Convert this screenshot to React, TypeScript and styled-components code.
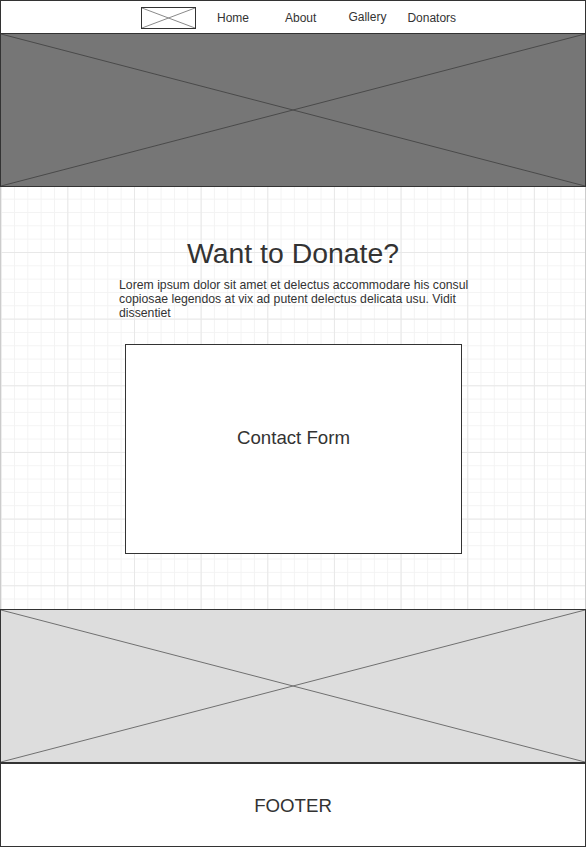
import React from "react";
import styled, { createGlobalStyle } from "styled-components";

const Global = createGlobalStyle`
  html, body { margin: 0; padding: 0; background: #ffffff; }
  body { font-family: "Liberation Sans", Arial, sans-serif; color: #333333; }
`;

const Page = styled.div`
  width: 586px;
  display: flex;
  flex-direction: column;
`;

const Nav = styled.header`
  box-sizing: border-box;
  height: 34px;
  border: 1px solid #333333;
  display: flex;
  align-items: center;
  padding-left: 140px;
  background: #ffffff;
`;

const Logo = styled.div`
  box-sizing: border-box;
  width: 55px;
  height: 22px;
  border: 1px solid #333333;
  margin-top: 1px;
  display: flex;
`;

const NavLink = styled.a<{ $ml: number; $dy?: number }>`
  font-size: 12px;
  line-height: 14px;
  color: #333333;
  text-decoration: none;
  margin-left: ${(p) => p.$ml}px;
  position: relative;
  top: ${(p) => p.$dy ?? 1}px;
`;

const Cross = styled.svg`
  display: block;
  width: 100%;
  height: 100%;
`;

const ImageBlock = styled.div<{ $bg: string; $h: number; $top: boolean }>`
  box-sizing: border-box;
  height: ${(p) => p.$h}px;
  background: ${(p) => p.$bg};
  border: 1px solid #333333;
  border-top-width: ${(p) => (p.$top ? 1 : 0)}px;
  display: flex;
`;

const GridSection = styled.section`
  box-sizing: border-box;
  height: 422px;
  border-left: 1px solid #cccccc;
  border-right: 1px solid #cccccc;
  background-color: #ffffff;
  background-image:
    linear-gradient(to right, #e8e8e8 1px, transparent 1px),
    linear-gradient(to bottom, #e8e8e8 1px, transparent 1px),
    linear-gradient(to right, #f3f3f3 1px, transparent 1px),
    linear-gradient(to bottom, #f3f3f3 1px, transparent 1px);
  background-size: 66.667px 66.667px, 66.667px 66.667px, 13.333px 13.333px, 13.333px 13.333px;
  background-position: -0.333px -1.667px, -0.333px -1.667px, -0.333px -1.667px, -0.333px -1.667px;
  display: flex;
  flex-direction: column;
  padding-top: 50px;
`;

const Heading = styled.h1`
  margin: 0;
  font-weight: normal;
  font-size: 28.4px;
  line-height: 32px;
  text-align: center;
  color: #333333;
`;

const Para = styled.p`
  margin: 9px 0 0 118px;
  width: 362px;
  font-size: 12.25px;
  line-height: 14px;
  color: #333333;
`;

const FormBox = styled.div`
  box-sizing: border-box;
  margin: 24px 0 0 124px;
  width: 337px;
  height: 210px;
  border: 1px solid #333333;
  background: #ffffff;
  display: flex;
  align-items: center;
  justify-content: center;
  padding-bottom: 22px;
  font-size: 18.67px;
  color: #333333;
`;

const Footer = styled.footer`
  box-sizing: border-box;
  height: 84px;
  border: 1px solid #333333;
  display: flex;
  align-items: center;
  justify-content: center;
  padding-top: 2px;
  font-size: 18.67px;
  color: #333333;
`;

const X = ({ color }: { color: string }) => (
  <Cross viewBox="0 0 100 100" preserveAspectRatio="none">
    <line x1="0" y1="0" x2="100" y2="100" stroke={color} strokeWidth="1" vectorEffect="non-scaling-stroke" />
    <line x1="0" y1="100" x2="100" y2="0" stroke={color} strokeWidth="1" vectorEffect="non-scaling-stroke" />
  </Cross>
);

export default function App() {
  return (
    <>
      <Global />
      <Page>
        <Nav>
          <Logo>
            <X color="#8a8a8a" />
          </Logo>
          <NavLink $ml={21}>Home</NavLink>
          <NavLink $ml={36}>About</NavLink>
          <NavLink $ml={32} $dy={0}>Gallery</NavLink>
          <NavLink $ml={21}>Donators</NavLink>
        </Nav>
        <ImageBlock $bg="#767676" $h={153} $top={false}>
          <X color="#4a4a4a" />
        </ImageBlock>
        <GridSection>
          <Heading>Want to Donate?</Heading>
          <Para>
            Lorem ipsum dolor sit amet et delectus accommodare his consul copiosae legendos at vix ad putent delectus delicata usu. Vidit dissentiet
          </Para>
          <FormBox>Contact Form</FormBox>
        </GridSection>
        <ImageBlock $bg="#dddddd" $h={154} $top={true}>
          <X color="#707070" />
        </ImageBlock>
        <Footer>FOOTER</Footer>
      </Page>
    </>
  );
}
